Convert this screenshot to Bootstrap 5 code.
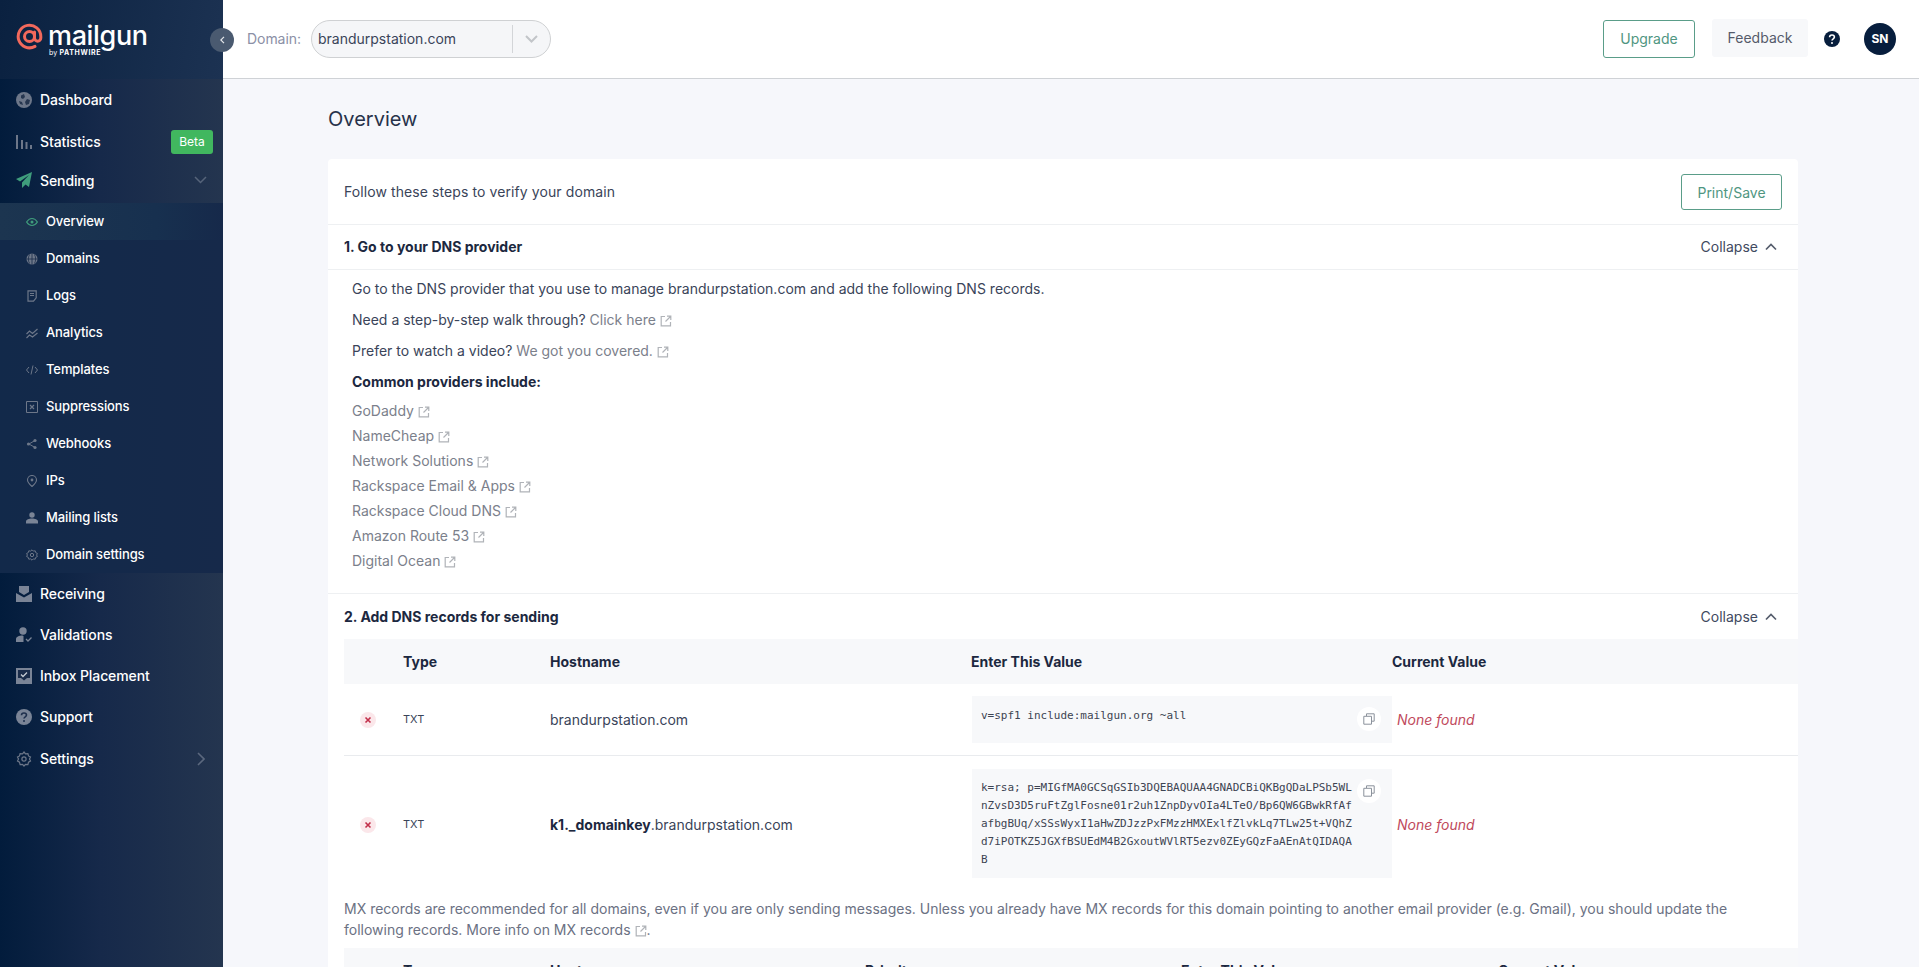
<!doctype html>
<html lang="en">
<head>
<meta charset="utf-8">
<title>Mailgun</title>
<link href="https://cdn.jsdelivr.net/npm/bootstrap@5.3.0/dist/css/bootstrap.min.css" rel="stylesheet">
<style>
html,body{height:100%;overflow:hidden}
body{font-family:Inter,"Liberation Sans",sans-serif;font-size:14px;color:#3a4459;background:#f6f7fb}
.shell{height:967px}
.side{width:223px;flex:none;background:linear-gradient(90deg,#021c3c,#16294a 45%,#24354f);color:#fff;position:relative}
.brand{height:79px;padding:23px 0 0 16px;gap:5px;background:linear-gradient(100deg,#0a2140,#1c3252)}
.brand-word{font-size:27px;font-weight:500;line-height:26px;letter-spacing:-.35px;color:#fff}
.brand-by{font-size:7px;line-height:8px;font-weight:700;letter-spacing:.65px;padding-left:1px}
.brand-by span{font-weight:400;letter-spacing:0}
.mrow{height:41px;padding-left:16px;padding-right:13px;gap:8px;font-weight:500;font-size:14px;letter-spacing:-.1px;color:#fff}
.mrow-tall{height:43px}
.mrow-open{height:40px;padding-bottom:6px}
.mrow svg.ico{width:16px;height:16px;flex:none}
.submenu{background:linear-gradient(90deg,#12294a,#16294a)}
.srow{height:37px;padding-left:26px;gap:8px;font-size:13px;font-weight:500;letter-spacing:-.1px;color:#fff}
.srow svg{width:12px;height:12px;flex:none}
.srow-on{background:linear-gradient(90deg,#1c3550,#17304f 70%,#16294a)}
.beta{background:#41b75f;color:#fff;font-size:12px;font-weight:400;letter-spacing:0;border-radius:3px;width:42px;height:24px;margin-right:-3px}
.chev-d{margin-right:3px}
.chev-r{margin-right:5px}
.toggle{position:absolute;left:210px;top:28px;width:24px;height:24px;border-radius:50%;background:#4a5a70;z-index:3}
.main{min-width:0}
.top{height:79px;flex:none;background:#fff;border-bottom:1px solid #cfd2d6;padding:0 23px 1px 24px}
.dlabel{color:#8b90a6;font-size:14px;margin-right:10px;letter-spacing:-.05px}
.dsel{width:240px;height:38px;border:1px solid #cfd1d3;border-radius:19px;background:#f5f6f8;padding-left:6px;color:#3a4459}
.dsel .grow{flex:1}
.dsep{width:1px;height:28px;background:#d3d5d8}
.dchev{width:37px}
.btn-up{--bs-btn-color:#4f9681;--bs-btn-border-color:#5a9d89;--bs-btn-hover-color:#4f9681;--bs-btn-hover-bg:#fff;--bs-btn-hover-border-color:#5a9d89;--bs-btn-font-size:14px;--bs-btn-border-radius:3px;--bs-btn-padding-x:0;--bs-btn-padding-y:0;display:flex;align-items:center;justify-content:center}
.up1{width:92px;height:38px}
.feed{width:96px;height:38px;background:#f7f8fa;color:#555b6a;margin-left:17px;border-radius:3px;margin-top:-1px;padding-bottom:2px}
.qmark{width:16px;height:16px;margin-left:16px}
.avatar{width:32px;height:32px;border-radius:50%;background:#071e3d;color:#fff;font-size:12px;font-weight:700;margin-left:24px}
.page{padding:0 121px 0 105px;min-height:0;overflow:hidden}
.ptitle{font-size:20px;font-weight:400;line-height:24px;color:#27324a;margin:28px 0 28px}
.panel{background:#fff;border-radius:4px}
.phead{height:66px;padding:0 16px 0 16px;border-bottom:1px solid #eef0f2;color:#3a4459}
.phead>span{letter-spacing:.09px}
.up2{width:101px;height:36px;margin-top:1px}
.shead{height:45px;padding:0 21px 0 16px;font-weight:700;color:#1c2840;font-size:14px}
.shead-line{border-bottom:1px solid #eef0f2}
.shead.shead-line{padding-bottom:1px}
.collapse-lnk{font-weight:400;color:#3f4a60;gap:7px;font-size:14px}
.sbody{padding:8px 16px 14px 24px;height:324px}
.sbody p{line-height:21px;margin:0 0 10px}
.sbody strong{color:#1c2840;font-weight:700}
.lnk{color:#7b808b;text-decoration:none}
.ext{width:12px;height:12px;margin-left:4px;vertical-align:-2px}
.plist{list-style:none;padding:0;margin:-4px 0 0}
.plist li{line-height:25px}
.dns{margin:0 0 0 16px;width:1454px;table-layout:fixed;border-collapse:collapse}
.dns th{background:#f7f8fa;height:45px;padding:0 0 1px;font-weight:700;font-size:14px;color:#1c2840;border:0;vertical-align:middle}
.dns td{padding:0;border:0;border-bottom:1px solid #e9ebee;vertical-align:middle;color:#3a4459}
.dns tr:last-child td{border-bottom:0}
.c1{width:59px}.c2{width:147px}.c3{width:421px}.c4{width:421px}
.m2{width:315px}.m3{width:316px}.m4{width:317px}
.stat{width:16px;height:16px;border-radius:50%;background:#fbe7ea;margin-left:16px}
.dns td.ttype{font-size:11px}
.valbox{position:relative;background:#f7f8fa;margin:12px 0 12px 1px;padding:10px 9px;font-family:"DejaVu Sans Mono","Liberation Mono",monospace;font-size:11px;line-height:18px;color:#3d4452;white-space:nowrap;width:420px}
.valbox-s{height:47px;padding-top:11px}
.valbox-l{height:109px;margin-top:13px;margin-bottom:15px}
.copybtn{position:absolute;right:11px;top:11px;width:24px;height:24px;border-radius:50%;background:#fff}
.valbox-l .copybtn{top:10px}
.copybtn svg{width:12px;height:12px}
.dns td.nf{color:#c0495c;font-style:italic;padding-left:5px}
.mxnote{padding:0 16px;margin:5px 0 0;line-height:21px;height:50px;color:#6b7183}
.mxnote .lnk{color:inherit}
b.dk{font-weight:700;color:#1c2840}
</style>
</head>
<body>
<svg width="0" height="0" class="position-absolute">
<symbol id="extl" viewBox="0 0 12 12"><path d="M5 1.500H1.200v9.300h9.300V7M7 1.200h3.800V5M10.500 1.500 5.500 6.500" fill="none" stroke="#b0b3b8" stroke-width="1.200"/></symbol>
<symbol id="copy" viewBox="0 0 12 12"><path d="M3.500 3V.8h7.700v7.400H8.800M.8 3.300h7.700v7.900H.8z" fill="none" stroke="#8b929c" stroke-width="1"/></symbol>
</svg>
<div class="shell d-flex">
<aside class="side d-flex flex-column">
  <div class="brand d-flex">
    <svg class="flex-shrink-0" width="27" height="27" viewBox="0 0 27 27"><circle cx="13.500" cy="13.500" r="5" fill="none" stroke="#f2695c" stroke-width="3"/><path d="M18.500 9v6a3 3 0 0 0 6.300 0v-1.500A11.300 11.300 0 1 0 19 23.400" fill="none" stroke="#f2695c" stroke-width="3" stroke-linecap="round"/></svg>
    <div>
      <div class="brand-word">mailgun</div>
      <div class="brand-by"><span>by</span> PATHWIRE</div>
    </div>
  </div>
  <nav>
    <div class="mrow d-flex align-items-center"><svg class="ico" viewBox="0 0 16 16"><circle cx="8" cy="8" r="8" fill="#6d7789"/><path d="M5 3.500 8 2l1 3-2 2-2-1zM11 7l3 1-1 4-3 1-1-3zM3 9l3 1 1 3-3-1z" fill="#26364f"/></svg>Dashboard</div>
    <div class="mrow mrow-tall d-flex align-items-center"><svg class="ico" viewBox="0 0 16 16"><path d="M0 1h2v14H0zM5 6h2v9H5zM9.500 8h2v7h-2zM14 11h2v4h-2z" fill="#6d7789"/></svg>Statistics<span class="beta ms-auto d-flex align-items-center justify-content-center">Beta</span></div>
    <div class="mrow mrow-open d-flex align-items-center"><svg class="ico" viewBox="0 0 16 16"><path d="M16 0 0 7l4 2.500L13 3 6 10.500V16l3.500-3.500 3.500 2.500z" fill="#3f9d7c"/></svg>Sending<svg class="ms-auto chev-d" width="13" height="8" viewBox="0 0 13 8"><path d="m1 1 5.500 5.500L12 1" fill="none" stroke="#56647a" stroke-width="1.500"/></svg></div>
    <div class="submenu">
      <div class="srow srow-on d-flex align-items-center"><svg viewBox="0 0 12 12"><path d="M.6 6S2.800 2.500 6 2.500 11.400 6 11.400 6 9.200 9.500 6 9.500.6 6 .6 6z" fill="none" stroke="#3f9d7c" stroke-width="1.200"/><circle cx="6" cy="6" r="1.500" fill="#3f9d7c"/></svg>Overview</div>
      <div class="srow d-flex align-items-center"><svg viewBox="0 0 12 12"><circle cx="6" cy="6" r="5.500" fill="#6d7789"/><path d="M.5 6h11M6 .5v11M3.500 1.500c-1.500 3-1.500 6 0 9M8.500 1.500c1.500 3 1.500 6 0 9" fill="none" stroke="#1a2c4a" stroke-width=".8"/></svg>Domains</div>
      <div class="srow d-flex align-items-center"><svg viewBox="0 0 12 12"><path d="M2 .8h8.200v7L7.500 11.200H2z" fill="none" stroke="#6d7789" stroke-width="1.200"/><path d="M4 3.500h4M4 5.500h4" stroke="#6d7789"/></svg>Logs</div>
      <div class="srow d-flex align-items-center"><svg viewBox="0 0 12 12"><path d="m.5 7 3-3 3 2.500 5-4.500M.5 11l3-3 3 2 5-4" fill="none" stroke="#6d7789" stroke-width="1.200"/></svg>Analytics</div>
      <div class="srow d-flex align-items-center"><svg viewBox="0 0 12 12"><path d="M3 3 .5 6 3 9M9 3l2.500 3L9 9M7 1.500 5 10.500" fill="none" stroke="#6d7789" stroke-width="1"/></svg>Templates</div>
      <div class="srow d-flex align-items-center"><svg viewBox="0 0 12 12"><path d="M.5.500h11v11H.5z" fill="none" stroke="#6d7789"/><path d="m4 4 4 4M8 4 4 8" stroke="#6d7789" stroke-width="1.200"/></svg>Suppressions</div>
      <div class="srow d-flex align-items-center"><svg viewBox="0 0 12 12"><path d="M9 2.500 3 6l6 3.500" fill="none" stroke="#6d7789"/><circle cx="9" cy="2.500" r="1.600" fill="#6d7789"/><circle cx="2.500" cy="6" r="1.600" fill="#6d7789"/><circle cx="9" cy="9.500" r="1.600" fill="#6d7789"/></svg>Webhooks</div>
      <div class="srow d-flex align-items-center"><svg viewBox="0 0 12 12"><path d="M6 11.500C3.500 9.300 1.500 7.500 1.500 5a4.500 4.500 0 0 1 9 0c0 2.500-2 4.300-4.500 6.500z" fill="none" stroke="#6d7789" stroke-width="1.100"/><circle cx="6" cy="5" r="1.400" fill="#6d7789"/></svg>IPs</div>
      <div class="srow d-flex align-items-center"><svg viewBox="0 0 12 12"><circle cx="6" cy="3" r="2.700" fill="#7a8496"/><path d="M0 11.500V9.500c0-2 3-3 6-3s6 1 6 3v2z" fill="#7a8496"/></svg>Mailing lists</div>
      <div class="srow d-flex align-items-center"><svg viewBox="0 0 12 12"><path d="m6 .8 1.300 1.300 1.900-.3.500 1.800 1.700.9-.8 1.500.8 1.500-1.700.9-.5 1.800-1.900-.3L6 11.200l-1.300-1.300-1.900.3-.5-1.800-1.700-.9.8-1.500-.8-1.500 1.700-.9.5-1.800 1.900.3z" fill="none" stroke="#6d7789"/><circle cx="6" cy="6" r="1.700" fill="none" stroke="#6d7789"/></svg>Domain settings</div>
    </div>
    <div class="mrow d-flex align-items-center"><svg class="ico" viewBox="0 0 16 16"><path d="M3 0h10v6L8 9 3 6zM0 7l8 4.500L16 7v9H0z" fill="#7a8496"/></svg>Receiving</div>
    <div class="mrow d-flex align-items-center"><svg class="ico" viewBox="0 0 16 16"><circle cx="7" cy="4" r="3.700" fill="#7a8496"/><path d="M0 15v-3c0-2 3-3.500 6.500-3.500l1 .5v6z" fill="#7a8496"/><path d="m10 12 2 2 3.500-3.500" fill="none" stroke="#7a8496" stroke-width="1.300"/></svg>Validations</div>
    <div class="mrow d-flex align-items-center"><svg class="ico" viewBox="0 0 16 16"><path d="M0 0h16v16H0z" fill="#7a8496"/><path d="M2 2h12v8h-3l-3 2.500L5 10H2z" fill="#1a2c4a"/><path d="m5 6.500 2 2 4-4" fill="none" stroke="#c6ccd4" stroke-width="1.300"/></svg>Inbox Placement</div>
    <div class="mrow d-flex align-items-center"><svg class="ico" viewBox="0 0 16 16"><circle cx="8" cy="8" r="8" fill="#7a8496"/><path d="M5.500 6.200C5.500 4.800 6.600 4 8 4s2.500.8 2.500 2.100c0 1.800-2.500 1.700-2.500 3.500" fill="none" stroke="#1e2f4c" stroke-width="1.600"/><circle cx="8" cy="12" r="1" fill="#1e2f4c"/></svg>Support</div>
    <div class="mrow mrow-tall d-flex align-items-center"><svg class="ico" viewBox="0 0 16 16"><path d="m8 1 1.500 1.800 2.400-.2.600 2.300 2 1.200-1 2 1 1.900-2 1.200-.6 2.300-2.400-.2L8 15l-1.500-1.700-2.400.2-.6-2.300-2-1.200 1-1.900-1-2 2-1.200.6-2.300 2.400.2z" fill="none" stroke="#6d7789" stroke-width="1.200"/><circle cx="8" cy="8" r="2.100" fill="none" stroke="#6d7789" stroke-width="1.200"/></svg>Settings<svg class="ms-auto chev-r" width="8" height="14" viewBox="0 0 8 14"><path d="m1 1 6 6-6 6" fill="none" stroke="#5b687e" stroke-width="1.600"/></svg></div>
  </nav>
  <div class="toggle d-flex align-items-center justify-content-center"><svg width="5" height="8" viewBox="0 0 5 8"><path d="M4 .8.800 4 4 7.200" fill="none" stroke="#e5e8ec" stroke-width="1.200"/></svg></div>
</aside>
<div class="main flex-grow-1 d-flex flex-column">
  <header class="top d-flex align-items-center">
    <span class="dlabel">Domain:</span>
    <div class="dsel d-flex align-items-center">
      <span class="grow">brandurpstation.com</span><span class="dsep"></span>
      <span class="dchev d-flex justify-content-center"><svg width="13" height="8" viewBox="0 0 13 8"><path d="m1 1 5.500 5.500L12 1" fill="none" stroke="#c2c5c9" stroke-width="2"/></svg></span>
    </div>
    <a href="#" class="btn btn-up up1 ms-auto">Upgrade</a>
    <span class="feed d-flex align-items-center justify-content-center">Feedback</span>
    <svg class="qmark" viewBox="0 0 16 16"><circle cx="8" cy="8" r="8" fill="#071e3d"/><path d="M5.600 6.200C5.600 4.800 6.700 4 8 4s2.400.8 2.400 2.100C10.400 7.800 8 7.800 8 9.600" fill="none" stroke="#fff" stroke-width="1.600"/><circle cx="8" cy="12" r="1" fill="#fff"/></svg>
    <span class="avatar d-flex align-items-center justify-content-center">SN</span>
  </header>
  <main class="page flex-grow-1">
    <h1 class="ptitle">Overview</h1>
    <div class="panel">
      <div class="phead d-flex align-items-center justify-content-between">
        <span>Follow these steps to verify your domain</span>
        <a href="#" class="btn btn-up up2">Print/Save</a>
      </div>
      <div class="shead shead-line d-flex align-items-center justify-content-between">
        <span>1. Go to your DNS provider</span>
        <span class="collapse-lnk d-flex align-items-center">Collapse <svg width="12" height="8" viewBox="0 0 12 8"><path d="m1 6.500 5-5 5 5" fill="none" stroke="#555d6c" stroke-width="1.700"/></svg></span>
      </div>
      <div class="sbody shead-line">
        <p>Go to the DNS provider that you use to manage brandurpstation.com and add the following DNS records.</p>
        <p>Need a step-by-step walk through? <a href="#" class="lnk">Click here<svg class="ext"><use href="#extl"/></svg></a></p>
        <p>Prefer to watch a video? <a href="#" class="lnk">We got you covered.<svg class="ext"><use href="#extl"/></svg></a></p>
        <p><strong>Common providers include:</strong></p>
        <ul class="plist">
          <li><a href="#" class="lnk">GoDaddy<svg class="ext"><use href="#extl"/></svg></a></li>
          <li><a href="#" class="lnk">NameCheap<svg class="ext"><use href="#extl"/></svg></a></li>
          <li><a href="#" class="lnk">Network Solutions<svg class="ext"><use href="#extl"/></svg></a></li>
          <li><a href="#" class="lnk">Rackspace Email &amp; Apps<svg class="ext"><use href="#extl"/></svg></a></li>
          <li><a href="#" class="lnk">Rackspace Cloud DNS<svg class="ext"><use href="#extl"/></svg></a></li>
          <li><a href="#" class="lnk">Amazon Route 53<svg class="ext"><use href="#extl"/></svg></a></li>
          <li><a href="#" class="lnk">Digital Ocean<svg class="ext"><use href="#extl"/></svg></a></li>
        </ul>
      </div>
      <div class="shead d-flex align-items-center justify-content-between">
        <span>2. Add DNS records for sending</span>
        <span class="collapse-lnk d-flex align-items-center">Collapse <svg width="12" height="8" viewBox="0 0 12 8"><path d="m1 6.500 5-5 5 5" fill="none" stroke="#555d6c" stroke-width="1.700"/></svg></span>
      </div>
      <table class="dns">
        <thead><tr><th class="c1"></th><th class="c2">Type</th><th class="c3">Hostname</th><th class="c4">Enter This Value</th><th>Current Value</th></tr></thead>
        <tbody>
          <tr>
            <td><div class="stat d-flex align-items-center justify-content-center"><svg width="8" height="8" viewBox="0 0 8 8"><path d="m1.500 1.500 5 5M6.500 1.500l-5 5" stroke="#c22f4a" stroke-width="1.600"/></svg></div></td>
            <td class="ttype">TXT</td>
            <td>brandurpstation.com</td>
            <td><div class="valbox valbox-s">v=spf1 include:mailgun.org ~all<span class="copybtn d-flex align-items-center justify-content-center"><svg><use href="#copy"/></svg></span></div></td>
            <td class="nf">None found</td>
          </tr>
          <tr>
            <td><div class="stat d-flex align-items-center justify-content-center"><svg width="8" height="8" viewBox="0 0 8 8"><path d="m1.500 1.500 5 5M6.500 1.500l-5 5" stroke="#c22f4a" stroke-width="1.600"/></svg></div></td>
            <td class="ttype">TXT</td>
            <td><b class="dk">k1._domainkey</b>.brandurpstation.com</td>
            <td><div class="valbox valbox-l">k=rsa; p=MIGfMA0GCSqGSIb3DQEBAQUAA4GNADCBiQKBgQDaLPSb5WL<br>nZvsD3D5ruFtZglFosne01r2uh1ZnpDyvOIa4LTeO/Bp6QW6GBwkRfAf<br>afbgBUq/xSSsWyxI1aHwZDJzzPxFMzzHMXExlfZlvkLq7TLw25t+VQhZ<br>d7iPOTKZ5JGXfBSUEdM4B2GxoutWVlRT5ezv0ZEyGQzFaAEnAtQIDAQA<br>B<span class="copybtn d-flex align-items-center justify-content-center"><svg><use href="#copy"/></svg></span></div></td>
            <td class="nf">None found</td>
          </tr>
        </tbody>
      </table>
      <p class="mxnote">MX records are recommended for all domains, even if you are only sending messages. Unless you already have MX records for this domain pointing to another email provider (e.g. Gmail), you should update the following records. <a href="#" class="lnk">More info on MX records<svg class="ext"><use href="#extl"/></svg></a>.</p>
      <table class="dns">
        <thead><tr><th class="c1"></th><th class="c2">Type</th><th class="m2">Host</th><th class="m3">Priority</th><th class="m4">Enter This Value</th><th>Current Value</th></tr></thead>
      </table>
    </div>
  </main>
</div>
</div>
<script src="https://cdn.jsdelivr.net/npm/bootstrap@5.3.0/dist/js/bootstrap.bundle.min.js"></script>
</body>
</html>
